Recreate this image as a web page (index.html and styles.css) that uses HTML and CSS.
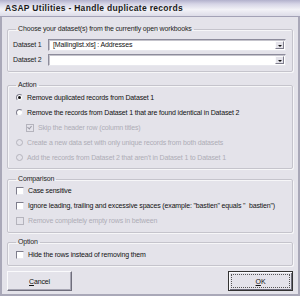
FILE: index.html
```html
<!DOCTYPE html>
<html lang="en">
<head>
  <meta charset="UTF-8" />
  <title>ASAP Utilities - Handle duplicate records</title>
  <link rel="stylesheet" href="styles.css">
</head>
<body>
  <div class="window">
    <div class="titlebar">ASAP Utilities - Handle duplicate records</div>

    <div class="dialog">
      <fieldset class="group group-source">
        <legend>Choose your dataset(s) from the currently open workbooks</legend>
        <div class="field">
          <label>Dataset 1</label>
          <div class="combo">
            <span class="combo-text">[Mailinglist.xls] : Addresses</span>
            <span class="combo-btn"></span>
          </div>
        </div>
        <div class="field">
          <label>Dataset 2</label>
          <div class="combo">
            <span class="combo-text"></span>
            <span class="combo-btn"></span>
          </div>
        </div>
      </fieldset>

      <fieldset class="group group-action">
        <legend>Action</legend>
        <div class="opt"><span class="radio checked"></span>Remove duplicated records from Dataset 1</div>
        <div class="opt"><span class="radio"></span>Remove the records from Dataset 1 that are found identical in Dataset 2</div>
        <div class="opt sub disabled"><span class="check checked"></span>Skip the header row (column titles)</div>
        <div class="opt disabled"><span class="radio"></span>Create a new data set with only unique records from both datasets</div>
        <div class="opt disabled"><span class="radio"></span>Add the records from Dataset 2 that aren't in Dataset 1 to Dataset 1</div>
      </fieldset>

      <fieldset class="group group-compare">
        <legend>Comparison</legend>
        <div class="opt"><span class="check"></span>Case sensitive</div>
        <div class="opt"><span class="check"></span>Ignore leading, trailing and excessive spaces (example: "bastien" equals "&nbsp; bastien")</div>
        <div class="opt disabled"><span class="check"></span>Remove completely empty rows in between</div>
      </fieldset>

      <fieldset class="group group-option">
        <legend>Option</legend>
        <div class="opt"><span class="check"></span>Hide the rows instead of removing them</div>
      </fieldset>

      <div class="buttons">
        <button class="btn"><u>C</u>ancel</button>
        <button class="btn btn-default"><span class="focus"><u>O</u>K</span></button>
      </div>
    </div>
  </div>
</body>
</html>
```

FILE: styles.css
```css
body {
  margin: 0;
  padding: 0;
  font-family: 'Liberation Sans', Arial, sans-serif;
  font-size: 7px;
  letter-spacing: -0.15px;
  color: #111;
  background-color: #e4e3ea;
}

.window {
  width: 300px;
  height: 296px;
  box-sizing: border-box;
  border: 2px solid #a9a8b8;
  border-top: none;
  background-color: #e4e3ea;
  display: flex;
  flex-direction: column;
}

.titlebar {
  height: 16px;
  margin: 0 -2px;
  padding-left: 5px;
  display: flex;
  align-items: center;
  font-weight: bold;
  font-size: 8.5px;
  letter-spacing: 0.3px;
  color: #1a1a1a;
  background: linear-gradient(#b2b1cc 0%, #d6d5e6 25%, #f2f2f7 60%, #dddce8 100%);
  border-bottom: 1px solid #a3a2b6;
}

.dialog {
  flex: 1;
  padding: 8px 5px 0 5px;
  display: flex;
  flex-direction: column;
}

.group {
  margin: 0;
  padding: 0 6px 0 5px;
  border: 1px solid #c5c4cc;
  border-radius: 2px;
  box-shadow: inset 1px 1px 0 #f6f6f8, 1px 1px 0 #f6f6f8;
}

.group legend {
  padding: 0 2px;
  margin-left: 3px;
  color: #222;
  line-height: 8px;
  height: 8px;
}

.group-source {
  padding-top: 4px;
  padding-bottom: 4px;
}

.field {
  display: flex;
  align-items: center;
  height: 15px;
}

.field label {
  width: 35px;
  color: #222;
}

.combo {
  flex: 1;
  height: 12px;
  box-sizing: border-box;
  display: flex;
  background-color: #fff;
  border: 1px solid #8d8c9c;
  border-right-color: #e8e8ee;
  border-bottom-color: #e8e8ee;
  box-shadow: inset 1px 1px 0 #c5c4cc;
}

.combo-text {
  flex: 1;
  padding-left: 4px;
  line-height: 10px;
}

.combo-btn {
  width: 9px;
  margin: 1px;
  background-color: #e4e3ea;
  border: 1px solid #fafafc;
  border-right-color: #7e7d8c;
  border-bottom-color: #7e7d8c;
  box-sizing: border-box;
  position: relative;
}

.combo-btn::after {
  content: "";
  position: absolute;
  left: 2px;
  top: 3px;
  border-left: 2px solid transparent;
  border-right: 2px solid transparent;
  border-top: 2px solid #111;
}

.group-action {
  margin-top: 9px;
  padding-top: 1px;
  padding-bottom: 3px;
}

.group-compare {
  margin-top: 6px;
  padding-top: 0;
  padding-bottom: 4px;
}

.group-option {
  margin-top: 5px;
  padding-top: 1px;
  padding-bottom: 3px;
}

.opt {
  height: 15px;
  display: flex;
  align-items: center;
  white-space: nowrap;
  color: #111;
  padding-left: 3px;
}

.opt.sub {
  padding-left: 13px;
}

.opt.disabled {
  color: #aeadb6;
}

.radio,
.check {
  width: 5px;
  height: 5px;
  margin-right: 4px;
  flex-shrink: 0;
  background-color: #fff;
  border: 1px solid #7e7d8c;
  border-right-color: #e8e8ee;
  border-bottom-color: #e8e8ee;
  position: relative;
}

.radio {
  border-radius: 50%;
}

.radio.checked::after {
  content: "";
  position: absolute;
  left: 1px;
  top: 1px;
  width: 3px;
  height: 3px;
  border-radius: 50%;
  background-color: #111;
}

.check {
  width: 6px;
  height: 6px;
}

.check.checked::after {
  content: "";
  position: absolute;
  left: 1px;
  top: 0;
  width: 2px;
  height: 3px;
  border-right: 1px solid #9c9ba6;
  border-bottom: 1px solid #9c9ba6;
  transform: rotate(40deg);
}

.disabled .radio,
.disabled .check {
  background-color: #e4e3ea;
  border-color: #b5b4bd;
}

.buttons {
  display: flex;
  justify-content: space-between;
  margin-top: 5px;
}

.btn {
  width: 65px;
  height: 20px;
  padding: 0;
  font-family: inherit;
  font-size: 7px;
  letter-spacing: -0.15px;
  color: #111;
  background-color: #e4e3ea;
  border: 1px solid #fafafc;
  border-right-color: #6f6e7c;
  border-bottom-color: #6f6e7c;
  box-shadow: inset -1px -1px 0 #a8a7b4;
}

.btn-default {
  border: 1px solid #333;
  box-shadow: inset 1px 1px 0 #fafafc, inset -1px -1px 0 #6f6e7c;
  display: flex;
  padding: 2px;
}

.btn-default .focus {
  flex: 1;
  display: flex;
  align-items: center;
  justify-content: center;
  border: 1px dotted #555;
}
```
